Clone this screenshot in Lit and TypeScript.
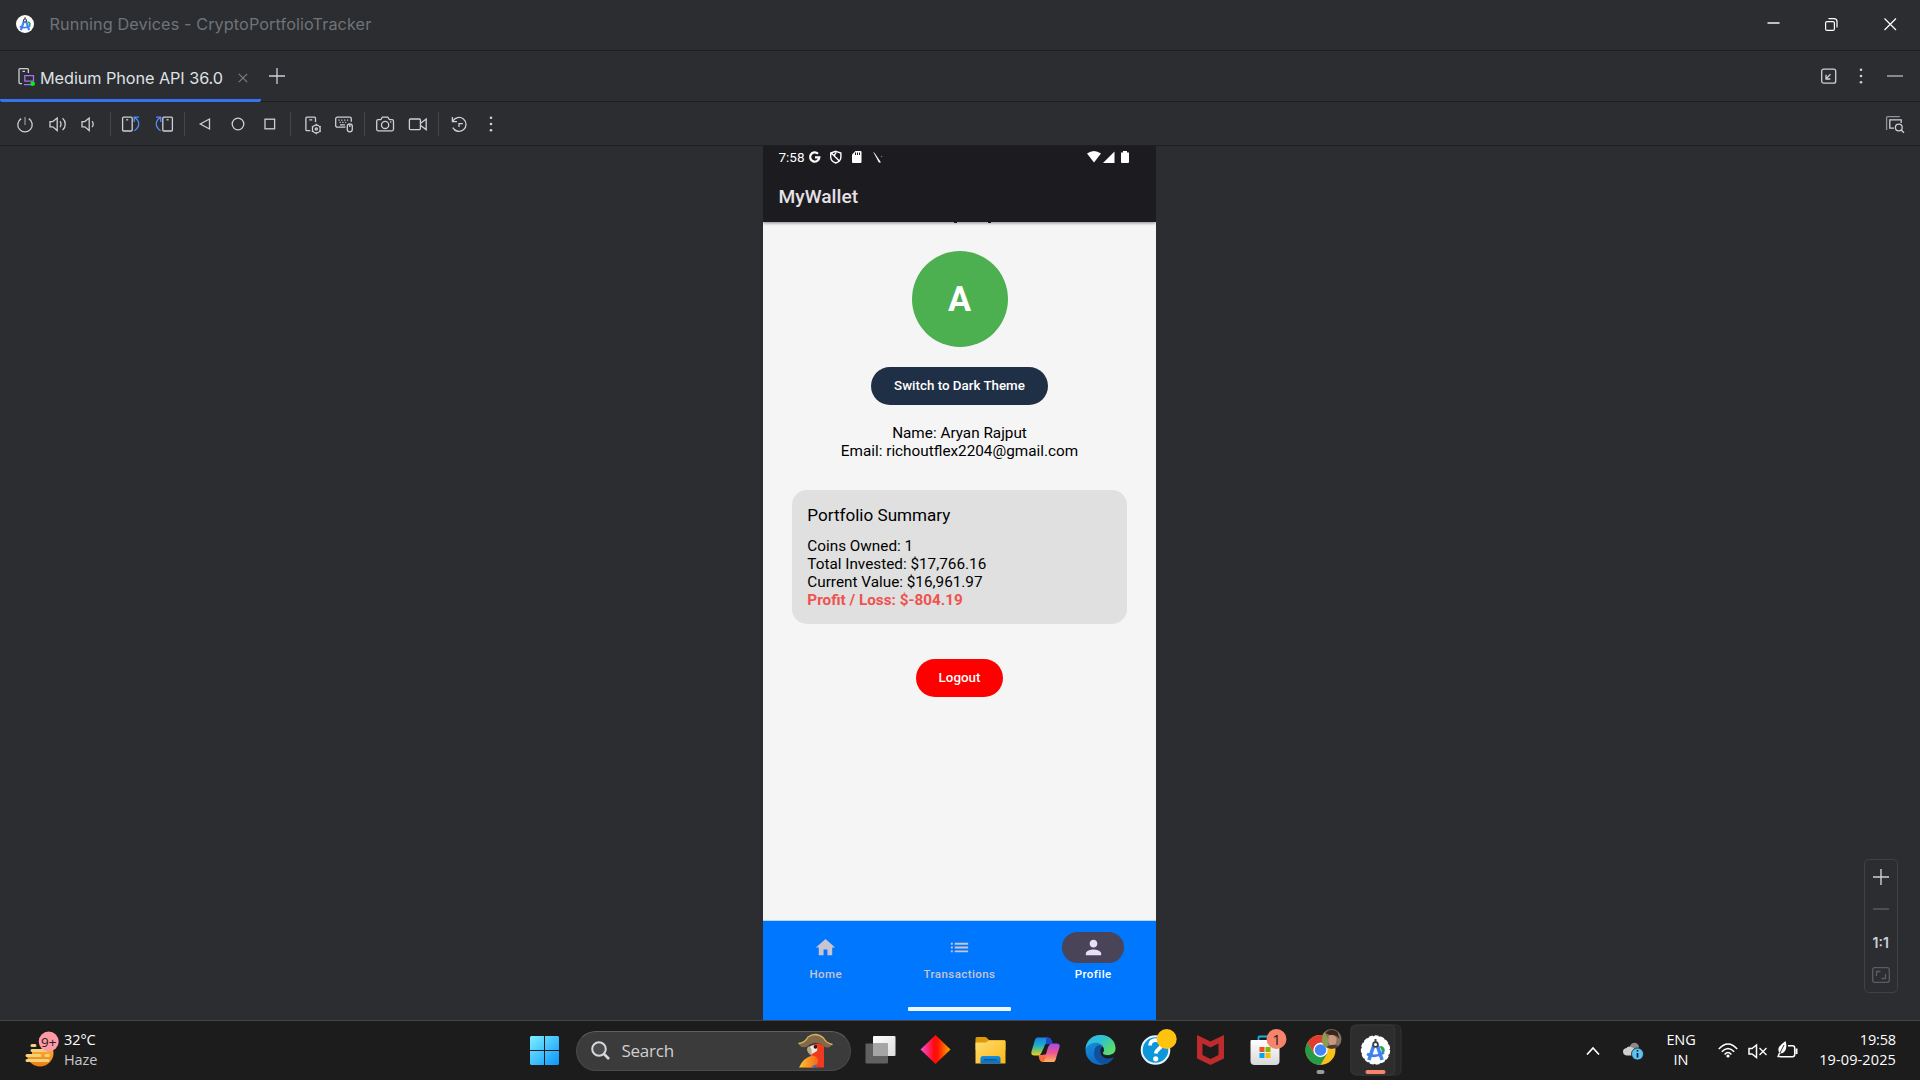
import { LitElement, html, css, svg } from "lit";
import { customElement } from "lit/decorators.js";

/* ---------- 20x20 toolbar glyphs ---------- */
const glyph = (body: unknown, w = 20, h = 20) =>
  html`<svg class="glyph" width=${w} height=${h} viewBox="0 0 ${w} ${h}">${body}</svg>`;

const power = svg`<path d="M6.2 4.6A7.2 7.2 0 1 0 13.8 4.6"/><path class="dim" d="M10 3V11"/>`;
const volUp = svg`<path d="M2 7.6h2.8L9.2 4v12.5L4.800 12.800H2z"/><path d="M12 7.300c1.300 1.500 1.300 4.300 0 5.800M14.600 4.300c3.500 3 3.500 8.800 0 11.800"/>`;
const volDown = svg`<path d="M2 7.600h2.800L9.200 4v12.500L4.800 12.800H2z"/><path d="M12 7.300c1.600 1.500 1.600 4.300 0 5.800"/>`;
const rotLeft = svg`<rect x="1.600" y="3.200" width="9.600" height="13.800" rx="1"/><path d="M5.200 5.800h2"/><path class="blue" d="M18 3.200H13.200V8M13.400 3.600c5.200 2.800 6.300 8.600 0 13.200"/>`;
const rotRight = svg`<rect x="8.800" y="3.200" width="9.600" height="13.800" rx="1"/><path d="M12.600 5.800h2"/><path class="blue" d="M2 3.200H6.800V8M6.600 3.600c-5.200 2.800-6.300 8.600 0 13.200"/>`;
const back = svg`<path d="M14.500 5v10L5.300 10z"/>`;
const home = svg`<circle cx="10" cy="10" r="5.800"/>`;
const overview = svg`<rect x="5" y="5.200" width="9.600" height="9.600"/>`;
const phoneGear = svg`<g transform="translate(1.300)"><path d="M8 16.700H4.600a1 1 0 0 1-1-1V4.200a1 1 0 0 1 1-1h7.600a1 1 0 0 1 1 1V8M7 5.800h3"/><circle cx="14" cy="15" r="3.900"/><circle cx="14" cy="15" r="1.100"/><path d="M14 9.800v1.400M14 18.800v1.400M9.500 12.400l1.200.7M17.300 16.900l1.200.7M9.500 17.600l1.200-.7M17.300 13.100l1.200-.7"/></g>`;
const keyboard = svg`<path d="M11.500 13.200H3.200a1.500 1.500 0 0 1-1.500-1.500V4.700a1.500 1.500 0 0 1 1.500-1.500h12.600a1.500 1.500 0 0 1 1.500 1.500v3"/><path d="M4.500 6.200h1.200M7.300 6.200h1.200M10.100 6.200h1.200M13 6.200h1.200M5.500 8.400h1.200M8.300 8.400h1.200M11.200 8.400h1M6 10.800h5"/><rect x="13.300" y="9.800" width="5" height="8" rx="2.500"/><path d="M15.800 10v3"/>`;
const camera = svg`<path d="M1.700 7.200a1.500 1.500 0 0 1 1.500-1.500h2.600l1.600-2.500h5.400l1.600 2.500h2.600a1.500 1.500 0 0 1 1.500 1.500v8.100a1.500 1.500 0 0 1-1.500 1.500H3.200a1.500 1.500 0 0 1-1.500-1.500z"/><circle cx="10.100" cy="10.900" r="3.600"/><path d="M15.200 8h1.200"/>`;
const video = svg`<g transform="translate(.8)"><rect x="1.600" y="5" width="11" height="10.600" rx="1"/><path d="M12.800 9.200L18.400 5V15.600L12.800 11.500"/></g>`;
const reset = svg`<path d="M3.400 3v4.600H8M3.800 7.200A7 7 0 1 1 3.800 13.600"/><path d="M10 13V9.600h3.800"/>`;
const dots = svg`<g class="fill"><circle cx="10" cy="3.700" r="1.300"/><circle cx="10" cy="10" r="1.300"/><circle cx="10" cy="16.300" r="1.300"/></g>`;
const inspect = svg`<path class="dim" d="M1.600 15V2.600a1 1 0 0 1 1-1H14.800"/><path d="M9 13.200H4.800V4.800H16.200V8"/><circle cx="13.800" cy="12.500" r="3.400"/><path d="M16.200 15L19 17.800"/>`;

/* ---------- taskbar app icons, origin at the cell centre ---------- */
const app = (body: unknown) =>
  html`<svg class="app" width="55" height="60" viewBox="-27.5 -30 55 60">${body}</svg>`;

const taskView = svg`
  <rect x="-7.500" y="-14" width="22.500" height="20" rx="1" fill="url(#tvw)"/>
  <rect x="-15" y="-6.500" width="22.500" height="20" rx="1" fill="#606060"/>
  <rect x="-7.500" y="-6.500" width="15" height="12.500" fill="#a5a5a5"/>
  <defs><linearGradient id="tvw" x2="1" y2="1"><stop stop-color="#fff"/><stop offset="1" stop-color="#dcdcdc"/></linearGradient></defs>`;
const diamond = svg`
  <defs><linearGradient id="dia"><stop stop-color="#ff4fe0"/><stop offset=".45" stop-color="#ff0a10"/><stop offset=".58" stop-color="#ff1500"/><stop offset="1" stop-color="#ffae00"/></linearGradient></defs>
  <path d="M0 -15L15 -.5L0 14L-15 -.5z" fill="url(#dia)"/>`;
const folder = svg`
  <defs><linearGradient id="fld" x2="1" y2="1"><stop stop-color="#ffdc70"/><stop offset="1" stop-color="#fbb816"/></linearGradient>
  <linearGradient id="fbl" x2="0" y2="1"><stop stop-color="#1690dc"/><stop offset="1" stop-color="#0a6cc0"/></linearGradient></defs>
  <path d="M-15 -11.500q0-1.500 1.500-1.500h8q1 0 2 1l2 2H13.500q1.500 0 1.500 1.500V0H-15z" fill="#dc9a08"/>
  <path d="M-15 -7.500h10.500l2.500-2H14q1 0 1 1V13.500H-15z" fill="url(#fld)"/>
  <path d="M-10 13.500V8.500q0-2.500 2.500-2.500h15q2.500 0 2.500 2.500v5z" fill="url(#fbl)"/>
  <path d="M-6.500 9.800h13" stroke="#07539b" stroke-width="1.200"/>`;
const copilot = svg`
  <defs><linearGradient id="cpa" x2="0" y2="1"><stop stop-color="#1f7fe8"/><stop offset=".4" stop-color="#18a9d0"/><stop offset=".7" stop-color="#6dc46c"/><stop offset="1" stop-color="#f5d020"/></linearGradient>
  <linearGradient id="cpb" x2="0" y2="1"><stop stop-color="#a04ce8"/><stop offset=".5" stop-color="#ee5590"/><stop offset="1" stop-color="#ffb25c"/></linearGradient></defs>
  <path d="M-8 -12.500H2q3 0 4 3l1 3H3q-3 0-4 3l-3 6q-1 3-4 3h-3q-4 0-3-4l3-10q1-4 3-4z" fill="url(#cpa)"/>
  <path d="M1 -12.500q4 0 5 3l1 3H3q-2 0-3 2z" fill="#1b48cc"/>
  <path d="M8 12H-2q-3 0-4-3L-7 5h3q3 0 4-3l3-6q1-2.500 4-2.500h4q4 0 3 4l-3 9q-1 5.500-3 5.500z" fill="url(#cpb)"/>
  <path d="M-2 12q-3 0-4-3l-1-3.500h3q2 0 3-1.500l1.500 3z" fill="#fa6a3c"/>
  <path d="M-.5 -5.500h3.800L.3 4.500h-3.600z" fill="#1c1c1c"/>`;
const edge = svg`
  <defs><linearGradient id="ega" x2="1" y2=".7"><stop stop-color="#2fb4ef"/><stop offset=".5" stop-color="#30c3cc"/><stop offset="1" stop-color="#62e05a"/></linearGradient>
  <linearGradient id="egb" x2=".6" y2="1"><stop stop-color="#1a98e4"/><stop offset="1" stop-color="#0a62bd"/></linearGradient></defs>
  <circle r="15" fill="url(#egb)"/>
  <path d="M-15 -1C-14 -10-8 -15 0 -15C9 -15 15 -9 15 -2C15 3 11 5 7 5C4 5 2 4 2.500 2.500C4 1 4 -5-2 -7C-8 -8-13 -5-15 -1z" fill="url(#ega)"/>
  <path d="M-6 0C-8 8-2 15 6 14C9 13 12 10 13 7.500C8 10 1 8 0 3C-1 0 0 -3 2 -4C-2 -6-5 -4-6 0z" fill="#104f9c"/>
  <path d="M2.500 2.500C2 4 3 5.200 7 5.200C11 5.200 14 4 15.500 0V7L13 7.300C8 10 1 8 0 3C-.8 0 .2 -2.500 2 -3.500C4 -1.500 3.800 1 2.500 2.500z" fill="#1c1c1c"/>`;
const help = svg`
  <circle r="13.800" fill="#0d96da" stroke="#e8f5fc" stroke-width="2"/>
  <path d="M-5.500 -4.500C-5.500 -8-3 -9.800 0 -9.800C3.500 -9.800 5.800 -7.800 5.800 -4.800C5.800 -1 .5 -.8 .2 3.500" fill="none" stroke="#fff" stroke-width="3.800"/>
  <circle cx=".2" cy="8.800" r="2.600" fill="#fff"/>
  <circle cx="11.200" cy="-11" r="10" fill="#ffc20e"/>`;
const shield = svg`
  <path d="M-13.500 -15L0 -8.500L13.500 -15V8.500L0 15L-13.500 8.500z" fill="#bf2a2c"/>
  <path d="M-8 -6.500L0 -2.500L8 -6.500V5L0 9L-8 5z" fill="#1c1c1c"/>`;
const store = svg`
  <defs><linearGradient id="sto" x2="0" y2="1"><stop stop-color="#fff"/><stop offset="1" stop-color="#d8d8d8"/></linearGradient></defs>
  <path d="M-7 -8v-4.500q0-1 1-1H6" fill="none" stroke="#18aee8" stroke-width="1.800"/>
  <path d="M-15 -9q0-1 1-1H13q1 0 1 1V11q0 4-4 4H-11q-4 0-4-4z" fill="url(#sto)"/>
  <path d="M-6 -3h5v5h-5z" fill="#f25022"/><path d="M0 -3h5v5h-5z" fill="#7fba00"/><path d="M-6 3h5v5h-5z" fill="#00a4ef"/><path d="M0 3h5v5h-5z" fill="#ffb900"/>
  <circle cx="11" cy="-11" r="10" fill="#f6836b"/>
  <text x="11" y="-5.500" text-anchor="middle" font-size="15" fill="#1c1c1c">1</text>`;
const chrome = svg`
  <circle r="15" fill="#fbc116"/>
  <path d="M-13 -7.500A15 15 0 0 1 13 -7.500H0L-6.500 3.700z" fill="#e33b2e"/>
  <path d="M-13 -7.500A15 15 0 0 0 0 15L6.500 3.700H-6.500z" fill="#279a48"/>
  <circle r="7.200" fill="#fff"/><circle r="5.800" fill="#4285f4"/>
  <circle cx="11" cy="-11" r="10" fill="#86705e"/>
  <path d="M4 -18q-3 4-2.500 9q1 5 5 7l2-8z" fill="#8f9a50"/>
  <path d="M5 -17q5-6 12 -1l2 7q-4-5-10-4z" fill="#35261f"/>
  <path d="M8 -14.500q6-2 8 3q0 7-4 8q-4-1-4-6z" fill="#c89883"/>
  <path d="M6 -3q6-4 12 -1q-6 5-12 1z" fill="#4b3a35"/>
  <rect x="-4" y="20" width="8" height="4" rx="2" fill="#9a9a9a"/>`;
const compass = svg`
  <path d="M3.500 -3.500A6 6 0 0 1 5 5L9 2A5 5 0 0 0 6 -4z" fill="#2ea55b"/>
  <path d="M-1.600 -5L-6.600 10M1.600 -5L6.600 10" stroke="#4285f4" stroke-width="3.600"/>
  <path d="M-8.500 4Q0 8.500 8.500 2.500" fill="none" stroke="#3f7fe8" stroke-width="2.600"/>
  <path d="M-1 -11h2v4h-2z" fill="#444"/><circle cy="-5.500" r="2.400" fill="#fff" stroke="#3a3f45" stroke-width="1.700"/>`;
const studio = svg`
  <rect x="-18" y="-25" width="43.500" height="50" rx="5" fill="#262626" stroke="#333"/>
  <rect x="-24.700" y="-25" width="44" height="50" rx="5" fill="#2d2d2d" stroke="#383838"/>
  <circle r="14" fill="#fff"/><circle r="14" fill="none" stroke="#fff" stroke-width="1.300" stroke-dasharray="4.200 1.664"/>
  ${compass}
  <rect x="-10" y="20" width="20" height="4" rx="2" fill="#f6836b"/>`;

const APPS = [taskView, diamond, folder, copilot, edge, help, shield, store, chrome, studio];

const TOOLS: unknown[][] = [
  [power, volUp, volDown],
  [rotLeft, rotRight],
  [back, home, overview],
  [phoneGear, keyboard],
  [camera, video],
  [reset, dots],
];

@customElement("app-root")
export class AppRoot extends LitElement {
  static styles = css`
    :host { display: block; width: 1920px; height: 1080px; overflow: hidden; background: #2b2d30; color: #dfe1e5; font-family: Inter, sans-serif; }
    * { box-sizing: border-box; }
    svg { display: block; flex: none; overflow: visible; }
    .page { display: grid; grid-template-rows: 51px 51px 44px 874px 60px; height: 1080px; }
    .bar { display: flex; align-items: center; border-bottom: 1px solid #1e1f22; white-space: nowrap; }
    .push { margin-left: auto; }
    .glyph { fill: none; stroke: #ced0d6; stroke-width: 1.300; }
    .glyph .dim { stroke: #8f9196; }
    .glyph .blue { stroke: #548af7; }
    .glyph .fill { fill: #ced0d6; stroke: none; }

    .title { padding: 0 20.500px 2px 16px; color: #6f737a; font-size: 16.250px; }
    .title-text { margin-left: 15.500px; letter-spacing: .08px; }
    .window-buttons { display: flex; gap: 38.500px; }

    .tabs { padding-right: 16.500px; }
    .tab { display: flex; align-items: center; align-self: flex-start; width: 261px; height: 51px; margin-bottom: -1px; padding: 4px 0 0 17px; border-bottom: 3px solid #3574f0; border-radius: 0 0 2px 2px; }
    .tab-text { margin: 1px 0 0 3px; width: 184px; font-size: 16.250px; letter-spacing: -.07px; }
    .tab-close { margin: 2px 0 0 14px; }
    .tab-add { margin-left: 8px; }
    .tab-tools { display: flex; gap: 12px; }
    .tab-hide { margin-left: 2.500px; }

    .tools { padding: 0 15px 0 9px; }
    .group { display: flex; align-items: center; }
    .cell { display: flex; justify-content: center; width: 32.400px; }
    .divider { width: 1px; height: 24px; margin: 0 4px; background: #43454a; }

    .stage { display: grid; grid-template-columns: 763px 393px 764px; }
    .side { display: flex; justify-content: flex-end; align-items: flex-end; padding: 0 22px 27px 0; }
    .zoom { display: flex; flex-direction: column; align-items: center; width: 34.500px; height: 134px; border: 1px solid #3f4145; border-radius: 5px; padding-top: 9px; font-size: 14px; font-weight: 600; color: #ced0d6; }
    .zoom-label { height: 20px; line-height: 20px; margin: 2px 0 14px; }

    .phone { display: grid; grid-template-columns: minmax(0, 1fr); grid-template-rows: 76px 698px 100px; font-family: Roboto, sans-serif; background: #f5f5f5; color: #000; }
    .head { background: #1b1b20; color: #e6e1e5; padding: 0 26px 0 15.500px; box-shadow: 0 1px 3px rgba(0,0,0,.45); clip-path: inset(0 0 -6px 0); }
    .status { display: flex; align-items: center; height: 22px; color: #fff; font-size: 13.500px; }
    .status-icons { margin-left: 3.500px; }
    .head-title { margin-top: 17px; font-size: 19.200px; line-height: 24px; font-weight: 500; }
    .profile { display: flex; flex-direction: column; align-items: center; overflow: hidden; }
    .avatar { width: 96px; height: 96px; margin-top: 28px; border-radius: 50%; background: #4caf50; color: #fff; font-size: 34.400px; font-weight: 700; line-height: 96px; text-align: center; }
    .button { height: 38px; line-height: 38px; border-radius: 19px; color: #fff; font-size: 13.350px; font-weight: 500; text-align: center; }
    .theme { width: 177px; margin-top: 20px; background: #1f2f46; }
    .logout { width: 87px; margin-top: 35px; background: #f00; }
    .identity { margin-top: 20px; text-align: center; font-size: 15.300px; line-height: 17.900px; }
    .card { width: 335px; height: 134px; margin-top: 29px; padding: 14.500px 15.300px; border-radius: 15px; background: #e0e0e0; font-size: 15.300px; line-height: 17.900px; }
    .card-title { font-size: 17.100px; line-height: 22px; margin-bottom: 12px; }
    .loss { color: #ef5350; font-weight: 700; }

    .nav { background: #07f; border-top: 1px solid #b5d5fb; }
    .nav-items { display: grid; grid-template-columns: repeat(3, 133.700px); margin: 0 -4.050px; padding-top: 11px; height: 86px; }
    .nav-item { display: flex; flex-direction: column; align-items: center; color: #cac4d0; font-size: 11.500px; font-weight: 500; letter-spacing: .42px; }
    .nav-pill { display: flex; align-items: center; justify-content: center; width: 61.500px; height: 30.500px; border-radius: 16px; margin-bottom: 4px; }
    .nav-item.active { color: #fff; }
    .active .nav-pill { background: #4a4458; }
    .gesture { width: 103px; height: 3.500px; margin: 0 auto; border-radius: 1px; background: #f0f6ff; }

    .taskbar { display: grid; grid-template-columns: 530px 323px 550px 1fr; border-top: 1px solid #424346; background: #1c1c1c; font-family: "Open Sans", "Noto Sans", sans-serif; color: #fff; }
    .weather { display: flex; align-items: center; padding-left: 24px; font-size: 14.500px; line-height: 20px; }
    .weather-text { margin: -2px 0 0 5px; letter-spacing: -.1px; }
    .muted { color: #c8c8c8; }
    .launch { display: flex; align-items: center; }
    .search { display: flex; align-items: center; width: 275px; height: 40px; margin-left: 17px; padding: 0 17px 0 13.500px; border-radius: 20px; border: 1px solid #494949; border-top-color: #606060; background: #3b3b3b; font-size: 17px; color: #d0d0d0; }
    .search-text { margin: -1px 0 0 12px; letter-spacing: -.25px; }
    .apps { display: flex; margin-top: -1px; }
    .tray { display: flex; align-items: center; justify-content: flex-end; padding-right: 24px; font-size: 14.500px; line-height: 20px; }
    .cloud { margin-left: 23px; }
    .lang { width: 34px; margin: -2px 20px 0 21px; text-align: center; letter-spacing: -.1px; }
    .clock { margin: -2px 0 0 18px; width: 80px; text-align: right; letter-spacing: .12px; }
    .time { letter-spacing: -.15px; }
  `;

  private titleBar() {
    return html`<div class="bar title">
      <svg width="18" height="18" viewBox="-14.500 -14.500 29 29"><circle r="14.500" fill="#fff"/>${compass}</svg>
      <span class="title-text">Running Devices - CryptoPortfolioTracker</span>
      <div class="window-buttons push">
        <svg width="20" height="20" fill="none" stroke="#fff" stroke-width="1.400"><path d="M4.500 9H16.500"/></svg>
        <svg width="20" height="20" fill="none" stroke="#fff" stroke-width="1.200"><rect x="4.600" y="7.600" width="8.800" height="8.800" rx="1.500"/><path d="M7.500 4.600H13a3 3 0 0 1 3 3V13.500"/></svg>
        <svg width="20" height="20" fill="none" stroke="#fff" stroke-width="1.200"><path d="M4.500 4.500L16 16M16 4.500L4.500 16"/></svg>
      </div>
    </div>`;
  }

  private tabBar() {
    return html`<div class="bar tabs">
      <div class="tab">
        <svg width="20" height="20" fill="none" stroke="#ced0d6" stroke-width="1.300"><path d="M5 16.600H3a1 1 0 0 1-1-1V2.600a1 1 0 0 1 1-1h7.400a1 1 0 0 1 1 1V6M5.500 4.400h2.500"/><path d="M7.800 8.600h8.700v5.600H7.800zM7 17.600h8" stroke="#a571e6"/><circle cx="15.700" cy="16.700" r="2.300" fill="#00f020" stroke="none"/></svg>
        <span class="tab-text">Medium Phone API 36.0</span>
        <svg class="tab-close" width="10" height="10" stroke="#7b7e85" stroke-width="1.200"><path d="M.8 .8L9.200 9.200M9.200 .8L.8 9.200"/></svg>
      </div>
      <svg class="tab-add" width="16" height="16" stroke="#ced0d6" stroke-width="1.300"><path d="M0 8H16M8 0V16"/></svg>
      <div class="tab-tools push">
        <svg width="20" height="20" fill="none" stroke="#ced0d6" stroke-width="1.300"><rect x="2.700" y="3.200" width="14" height="14" rx="2"/><path d="M11.500 8.200L7 12.700M7 8.700V13H11.300"/></svg>
        ${glyph(dots)}
        <svg class="tab-hide" width="18" height="20" stroke="#9da0a6" stroke-width="1.600"><path d="M1 10H17"/></svg>
      </div>
    </div>`;
  }

  private toolBar() {
    return html`<div class="bar tools">
      ${TOOLS.map((g, i) => html`
        ${i ? html`<div class="divider"></div>` : ""}
        <div class="group">${g.map((t) => html`<div class="cell">${glyph(t)}</div>`)}</div>`)}
      <div class="push">${glyph(inspect, 20, 18)}</div>
    </div>`;
  }

  private phone() {
    return html`<div class="phone">
      <div class="head">
        <div class="status">
          <span>7:58</span>
          <svg class="status-icons" width="76" height="14" viewBox="0 0 76 14">
            <path d="M10 3.800A4.600 4.600 0 1 0 11.300 7.400H7" fill="none" stroke="#fff" stroke-width="2.300"/>
            <path d="M27.800 1.300L32.900 3V7C32.900 10 30.800 12 27.800 13C24.800 12 22.700 10 22.700 7V3zM23.300 3L31.800 11.500M28.300 2.500Q24.300 6 29.300 8.500" fill="none" stroke="#fff" stroke-width="1.400"/>
            <path d="M47.500 1H52.500q1 0 1 1V12q0 1-1 1H45q-1 0-1-1V4.500z" fill="#fff"/><path d="M47.500 2.500v2.500M49.500 2.500v2.500M51.500 2.500v2.500" stroke="#1b1b20"/>
            <path d="M65 1.500L67 3.500L73 12.500L70.800 12.500L68.500 8z" fill="#fff"/><circle cx="73.600" cy="6.500" r=".8" fill="#777"/>
          </svg>
          <svg class="push" width="43" height="14" viewBox="0 0 43 14" fill="#fff"><path d="M0 3.500Q7 -1.500 14 3.500L7 12.500z"/><path d="M27.500 1.500V13H16z"/><path d="M34 2.500h2V1h4v1.500h2V12q0 1-1 1h-6q-1 0-1-1z"/></svg>
        </div>
        <div class="head-title">MyWallet</div>
      </div>
      <div class="profile">
        <svg width="40" height="1" fill="#222"><path d="M14 0h3v1h-3zM48 0h3v1h-3z"/></svg>
        <div class="avatar">A</div>
        <div class="button theme">Switch to Dark Theme</div>
        <div class="identity">Name: Aryan Rajput<br>Email: richoutflex2204@gmail.com</div>
        <div class="card">
          <div class="card-title">Portfolio Summary</div>
          <div>Coins Owned: 1</div>
          <div>Total Invested: $17,766.16</div>
          <div>Current Value: $16,961.97</div>
          <div class="loss">Profit / Loss: $-804.19</div>
        </div>
        <div class="button logout">Logout</div>
      </div>
      <div class="nav">
        <div class="nav-items">
          <div class="nav-item"><div class="nav-pill"><svg width="23" height="23" viewBox="0 0 24 24" fill="#cac4d0"><path d="M10 20v-6h4v6h5v-8h3L12 3 2 12h3v8z"/></svg></div>Home</div>
          <div class="nav-item"><div class="nav-pill"><svg width="23" height="23" viewBox="0 0 24 24" fill="#cac4d0"><path d="M3 13h2v-2H3v2zm0 4h2v-2H3v2zm0-8h2V7H3v2zm4 4h14v-2H7v2zm0 4h14v-2H7v2zM7 7v2h14V7H7z"/></svg></div>Transactions</div>
          <div class="nav-item active"><div class="nav-pill"><svg width="23" height="23" viewBox="0 0 24 24" fill="#e8def8"><path d="M12 12c2.210 0 4-1.790 4-4s-1.790-4-4-4-4 1.790-4 4 1.790 4 4 4zm0 2c-2.670 0-8 1.340-8 4v2h16v-2c0-2.660-5.330-4-8-4z"/></svg></div>Profile</div>
        </div>
        <div class="gesture"></div>
      </div>
    </div>`;
  }

  private taskbar() {
    return html`<div class="taskbar">
      <div class="weather">
        <svg width="35" height="38" viewBox="0 0 35 38">
          <defs><linearGradient id="sun" x2="0" y2="1"><stop stop-color="#ffc93a"/><stop offset="1" stop-color="#ee7b16"/></linearGradient></defs>
          <circle cx="16" cy="21" r="13.500" fill="url(#sun)"/><path d="M0 0H20V17H0zM0 17H8V24H0z" fill="#1c1c1c"/>
          <path d="M8 13.500h3M8 18.500h14M3 23.500h13M22 23.500h2.500M3 28.500h21" stroke="#f3d27a" stroke-width="3" stroke-linecap="round"/>
          <circle cx="24.700" cy="9.500" r="10" fill="#ff99a4"/><text x="24.700" y="14.500" text-anchor="middle" font-size="13.500" fill="#222">9+</text>
        </svg>
        <div class="weather-text">32°C<br><span class="muted">Haze</span></div>
      </div>
      <div class="launch">
        <svg width="29" height="29" viewBox="0 0 29 29"><defs><linearGradient id="win" gradientUnits="userSpaceOnUse" x1="0" y1="0" x2="29" y2="29"><stop stop-color="#7df0ff"/><stop offset="1" stop-color="#0a95fb"/></linearGradient></defs><path d="M1 0H14V14H0V1zM15 0H28L29 1V14H15zM0 15H14V29H1L0 28zM15 15H29V28L28 29H15z" fill="url(#win)"/></svg>
        <div class="search">
          <svg width="19" height="19" fill="none" stroke="#d8d8d8" stroke-width="2"><circle cx="8" cy="8" r="6.800" fill="#4a4d50"/><path d="M13 13L18 18" stroke-width="2.600"/></svg>
          <span class="search-text">Search</span>
          <svg class="push" width="35" height="34" viewBox="0 0 35 34">
            <defs><linearGradient id="wing"><stop stop-color="#ffc52e"/><stop offset="1" stop-color="#f4661e"/></linearGradient></defs>
            <path d="M13 12Q20 7 26 12V33.500H8Q11 26 16 23Q11 21 12 15z" fill="#ee3b20"/>
            <path d="M1 33.500Q5 24 14 21.500Q21 22 20 29L16 33.500z" fill="url(#wing)"/><path d="M13 33.500l4-3 3 3z" fill="#3f6fa8"/>
            <path d="M11 13Q15 10 19.500 12.500L19 17L14 20Q11 20 10 17z" fill="#f3e8df"/><path d="M10 12.500Q14 13 13.500 17Q13.500 20 14 22Q9 19 9 15z" fill="#bba488"/><circle cx="17.500" cy="12.800" r="1.900" fill="#2b1a12"/>
            <path d="M.5 9.500Q7 9 10 3Q18 -2.500 25.500 4Q28 9 34.500 10.500Q31 15 26 12.500Q18 5 9 12.500Q3 15 .5 9.500z" fill="#83694a"/><path d="M.5 9.500Q7 9 10 3Q18 -2.500 25.500 4Q28 9 34.500 10.500" fill="none" stroke="#dcb55a" stroke-width="1.300"/>
          </svg>
        </div>
      </div>
      <div class="apps">${APPS.map((a) => app(a))}</div>
      <div class="tray">
        <svg width="14" height="10" fill="none" stroke="#fff" stroke-width="1.700"><path d="M1 8.500L7 2L13 8.500"/></svg>
        <svg class="cloud" width="20" height="20" viewBox="0 0 20 20"><path d="M7 5Q9 1 13 2Q16 3 16 7Q19 9 18 13H5z" fill="#8b8b8b"/><path d="M3.500 14.500Q0 14 0 10.500Q0 7.500 3.500 7Q5 4.500 8 6Q13 7 14 14.500z" fill="#cfcfcf"/><circle cx="14.500" cy="13" r="6" fill="#57c4f8" stroke="#1c1c1c" stroke-width=".8"/><path d="M14.500 12V16.500M14.500 9v1.600" stroke="#1c1c1c" stroke-width="1.700"/></svg>
        <div class="lang">ENG<br>IN</div>
        <svg width="80" height="20" viewBox="0 0 80 20" fill="none" stroke="#fff" stroke-width="1.500">
          <path d="M.8 8Q10 -2 19.200 8M3.800 10.800Q10 4 16.200 10.800M6.600 13.500Q10 9.500 13.400 13.500"/><circle cx="10" cy="15" r="1.600" fill="#fff" stroke="none"/>
          <path d="M31 7.500h3L38.500 4V16.500L34 13H31z"/><path d="M41.500 7L48.500 14M48.500 7L41.500 14" stroke-width="1.300"/>
          <path d="M70 4.800H74.500a2.200 2.200 0 0 1 2.200 2.200V13.500a2.200 2.200 0 0 1-2.200 2.200H62.500a2.200 2.200 0 0 1-1.500-.6"/><path d="M77.500 8.500h1v3.500h-1" stroke-width="2"/><path d="M67.500 0Q69.500 6 67 10Q65 13.200 61.500 12.200Q59.500 9 61 6Q63.500 3 67.500 0z" fill="#fff" stroke="none"/><path d="M66 4L60 16" stroke="#1c1c1c" stroke-width=".9"/><path d="M61.500 12L59.800 16.200"/>
        </svg>
        <div class="clock"><span class="time">19:58</span><br>19-09-2025</div>
      </div>
    </div>`;
  }

  render() {
    return html`<div class="page">
      ${this.titleBar()}${this.tabBar()}${this.toolBar()}
      <div class="stage">
        <div></div>
        ${this.phone()}
        <div class="side">
          <div class="zoom">
            <svg width="16" height="16" stroke="#ced0d6" stroke-width="1.400"><path d="M0 8H16M8 0V16"/></svg>
            <svg width="16" height="46" stroke="#5a5d63" stroke-width="1.400"><path d="M0 24H16"/></svg>
            <div class="zoom-label">1:1</div>
            <svg width="18" height="16" fill="none" stroke="#5a5d63" stroke-width="1.300"><rect x=".7" y=".7" width="16.600" height="14.600" rx="2"/><path d="M4.500 9V4.500H8.500M13.500 7V11.500H9.500"/></svg>
          </div>
        </div>
      </div>
      ${this.taskbar()}
    </div>`;
  }
}
